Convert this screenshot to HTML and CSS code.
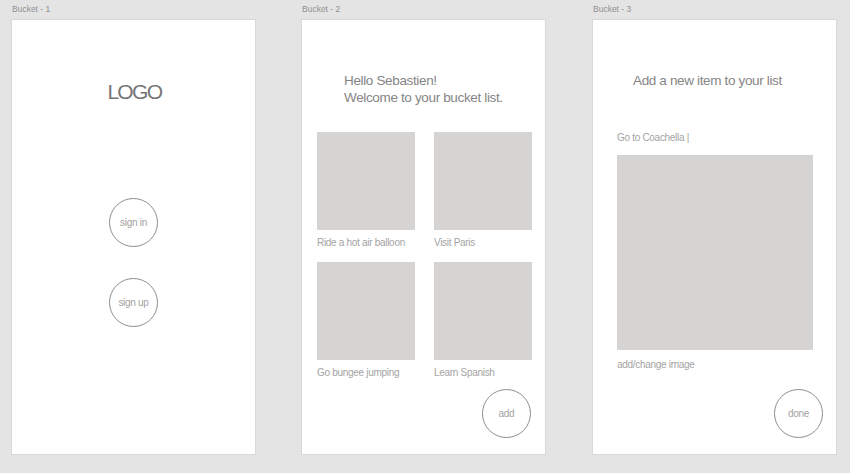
FILE: index.html
```html
<!DOCTYPE html>
<html lang="en">
<head>
<meta charset="utf-8">
<title>Bucket wireframes</title>
<link rel="stylesheet" href="styles.css">
</head>
<body>
<div class="canvas">
  <section class="frame">
    <div class="frame-label">Bucket - 1</div>
    <div class="board board-1">
      <div class="logo">LOGO</div>
      <div class="circle circle-signin">sign in</div>
      <div class="circle circle-signup">sign up</div>
    </div>
  </section>

  <section class="frame">
    <div class="frame-label">Bucket - 2</div>
    <div class="board board-2">
      <div class="heading heading-2">Hello Sebastien!<br>Welcome to your bucket list.</div>
      <div class="grid">
        <div class="item"><div class="thumb"></div><div class="caption">Ride a hot air balloon</div></div>
        <div class="item"><div class="thumb"></div><div class="caption">Visit Paris</div></div>
        <div class="item"><div class="thumb"></div><div class="caption">Go bungee jumping</div></div>
        <div class="item"><div class="thumb"></div><div class="caption">Learn Spanish</div></div>
      </div>
      <div class="circle circle-add">add</div>
    </div>
  </section>

  <section class="frame frame-last">
    <div class="frame-label">Bucket - 3</div>
    <div class="board board-3">
      <div class="heading heading-3">Add a new item to your list</div>
      <div class="caption input-text">Go to Coachella |</div>
      <div class="big-image"></div>
      <div class="caption image-caption">add/change image</div>
      <div class="circle circle-done">done</div>
    </div>
  </section>
</div>
</body>
</html>
```

FILE: styles.css
```css
html, body {
  margin: 0;
  padding: 0;
}

body {
  width: 850px;
  height: 473px;
  overflow: hidden;
  background: #e4e4e4;
  font-family: "Liberation Sans", Arial, Helvetica, sans-serif;
}

.canvas {
  display: flex;
  gap: 45px;
  padding-left: 11px;
}

.frame {
  width: 245px;
  display: flex;
  flex-direction: column;
}

.frame-last {
  margin-left: 1px;
}

.frame-label {
  height: 19px;
  line-height: 19px;
  font-size: 8.5px;
  color: #909090;
  padding-left: 1px;
}

.board {
  box-sizing: border-box;
  height: 436px;
  background: #ffffff;
  border: 1px solid #d8d8d8;
  display: flex;
  flex-direction: column;
}

/* Board 1 */
.board-1 {
  align-items: center;
  padding-top: 60px;
}

.logo {
  font-size: 21px;
  line-height: 24px;
  letter-spacing: -1.7px;
  margin-right: -1.7px;
  color: #767676;
}

.circle {
  box-sizing: border-box;
  width: 49px;
  height: 49px;
  border: 1px solid #8e8e8e;
  border-radius: 50%;
  display: flex;
  align-items: center;
  justify-content: center;
  font-size: 10px;
  letter-spacing: -0.3px;
  color: #a2a2a2;
  flex: none;
}

.circle-signin {
  margin-top: 94px;
}

.circle-signup {
  margin-top: 31px;
}

/* Shared text */
.heading {
  font-size: 13.5px;
  line-height: 16.5px;
  letter-spacing: -0.35px;
  color: #858585;
  margin-top: 53px;
}

.caption {
  font-size: 10px;
  line-height: 12px;
  letter-spacing: -0.3px;
  color: #a3a3a3;
}

/* Board 2 */
.board-2 {
  padding: 0 14px 0 15px;
}

.heading-2 {
  margin-left: 27px;
}

.grid {
  margin-top: 26.3px;
  display: grid;
  grid-template-columns: 98px 98px;
  column-gap: 19px;
  row-gap: 13px;
}

.thumb {
  width: 98px;
  height: 98px;
  background: #d5d4d3;
}

.item .caption {
  margin-top: 7px;
}

.circle-add {
  align-self: flex-end;
  margin-top: 10px;
}

/* Board 3 */
.board-3 {
  padding: 0 23px 0 24px;
}

.heading-3 {
  margin-left: 16px;
}

.input-text {
  margin-top: 42.5px;
}

.big-image {
  margin-top: 11.3px;
  width: 196px;
  height: 195px;
  background: #d5d4d3;
}

.image-caption {
  margin-top: 8.4px;
}

.circle-done {
  align-self: flex-end;
  margin-top: 18.6px;
  margin-right: -10px;
}
```
